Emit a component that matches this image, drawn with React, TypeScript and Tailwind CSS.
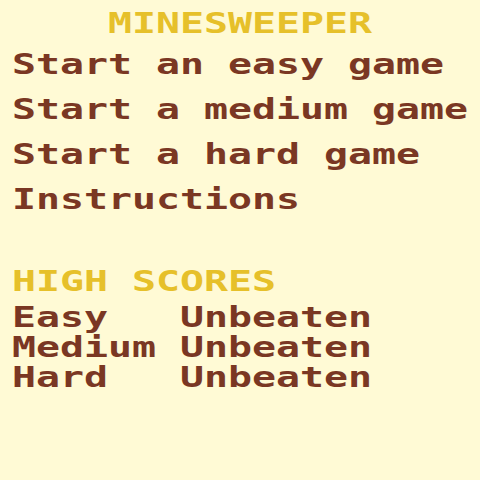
import React from "react";

const menu = ["Start an easy game", "Start a medium game", "Start a hard game", "Instructions"];

const scores = [
  { level: "Easy", score: "Unbeaten" },
  { level: "Medium", score: "Unbeaten" },
  { level: "Hard", score: "Unbeaten" },
];

// the original is an 8x8 pixel font; stretch a bold mono to its 24px cell
function Wide({ children, center }: { children: React.ReactNode; center?: boolean }) {
  return (
    <span className={(center ? "origin-center" : "origin-left") + " inline-block scale-x-[1.375] whitespace-pre"}>
      {children}
    </span>
  );
}

export default function App() {
  return (
    <main
      className="w-[480px] h-[480px] bg-[#fffad5] text-[#7a3723] font-bold text-[29px] pt-2 pl-[12px] overflow-hidden"
      style={{ fontFamily: '"DejaVu Sans Mono", "Liberation Mono", monospace' }}
    >
      <h1 className="text-center text-[#e6c02a] leading-[30px] pr-[12px]">
        <Wide center>MINESWEEPER</Wide>
      </h1>
      <nav className="flex flex-col items-start mt-[4px]">
        {menu.map((m) => (
          <button key={m} className="text-left leading-[45px]">
            <Wide>{m}</Wide>
          </button>
        ))}
      </nav>
      <h2 className="text-[#e6c02a] leading-[30px] mt-[44px]">
        <Wide>HIGH SCORES</Wide>
      </h2>
      <div className="grid grid-cols-[168px_auto] mt-[6px]">
        {scores.map((s) => (
          <React.Fragment key={s.level}>
            <span className="leading-[30px]"><Wide>{s.level}</Wide></span>
            <span className="leading-[30px]"><Wide>{s.score}</Wide></span>
          </React.Fragment>
        ))}
      </div>
    </main>
  );
}
